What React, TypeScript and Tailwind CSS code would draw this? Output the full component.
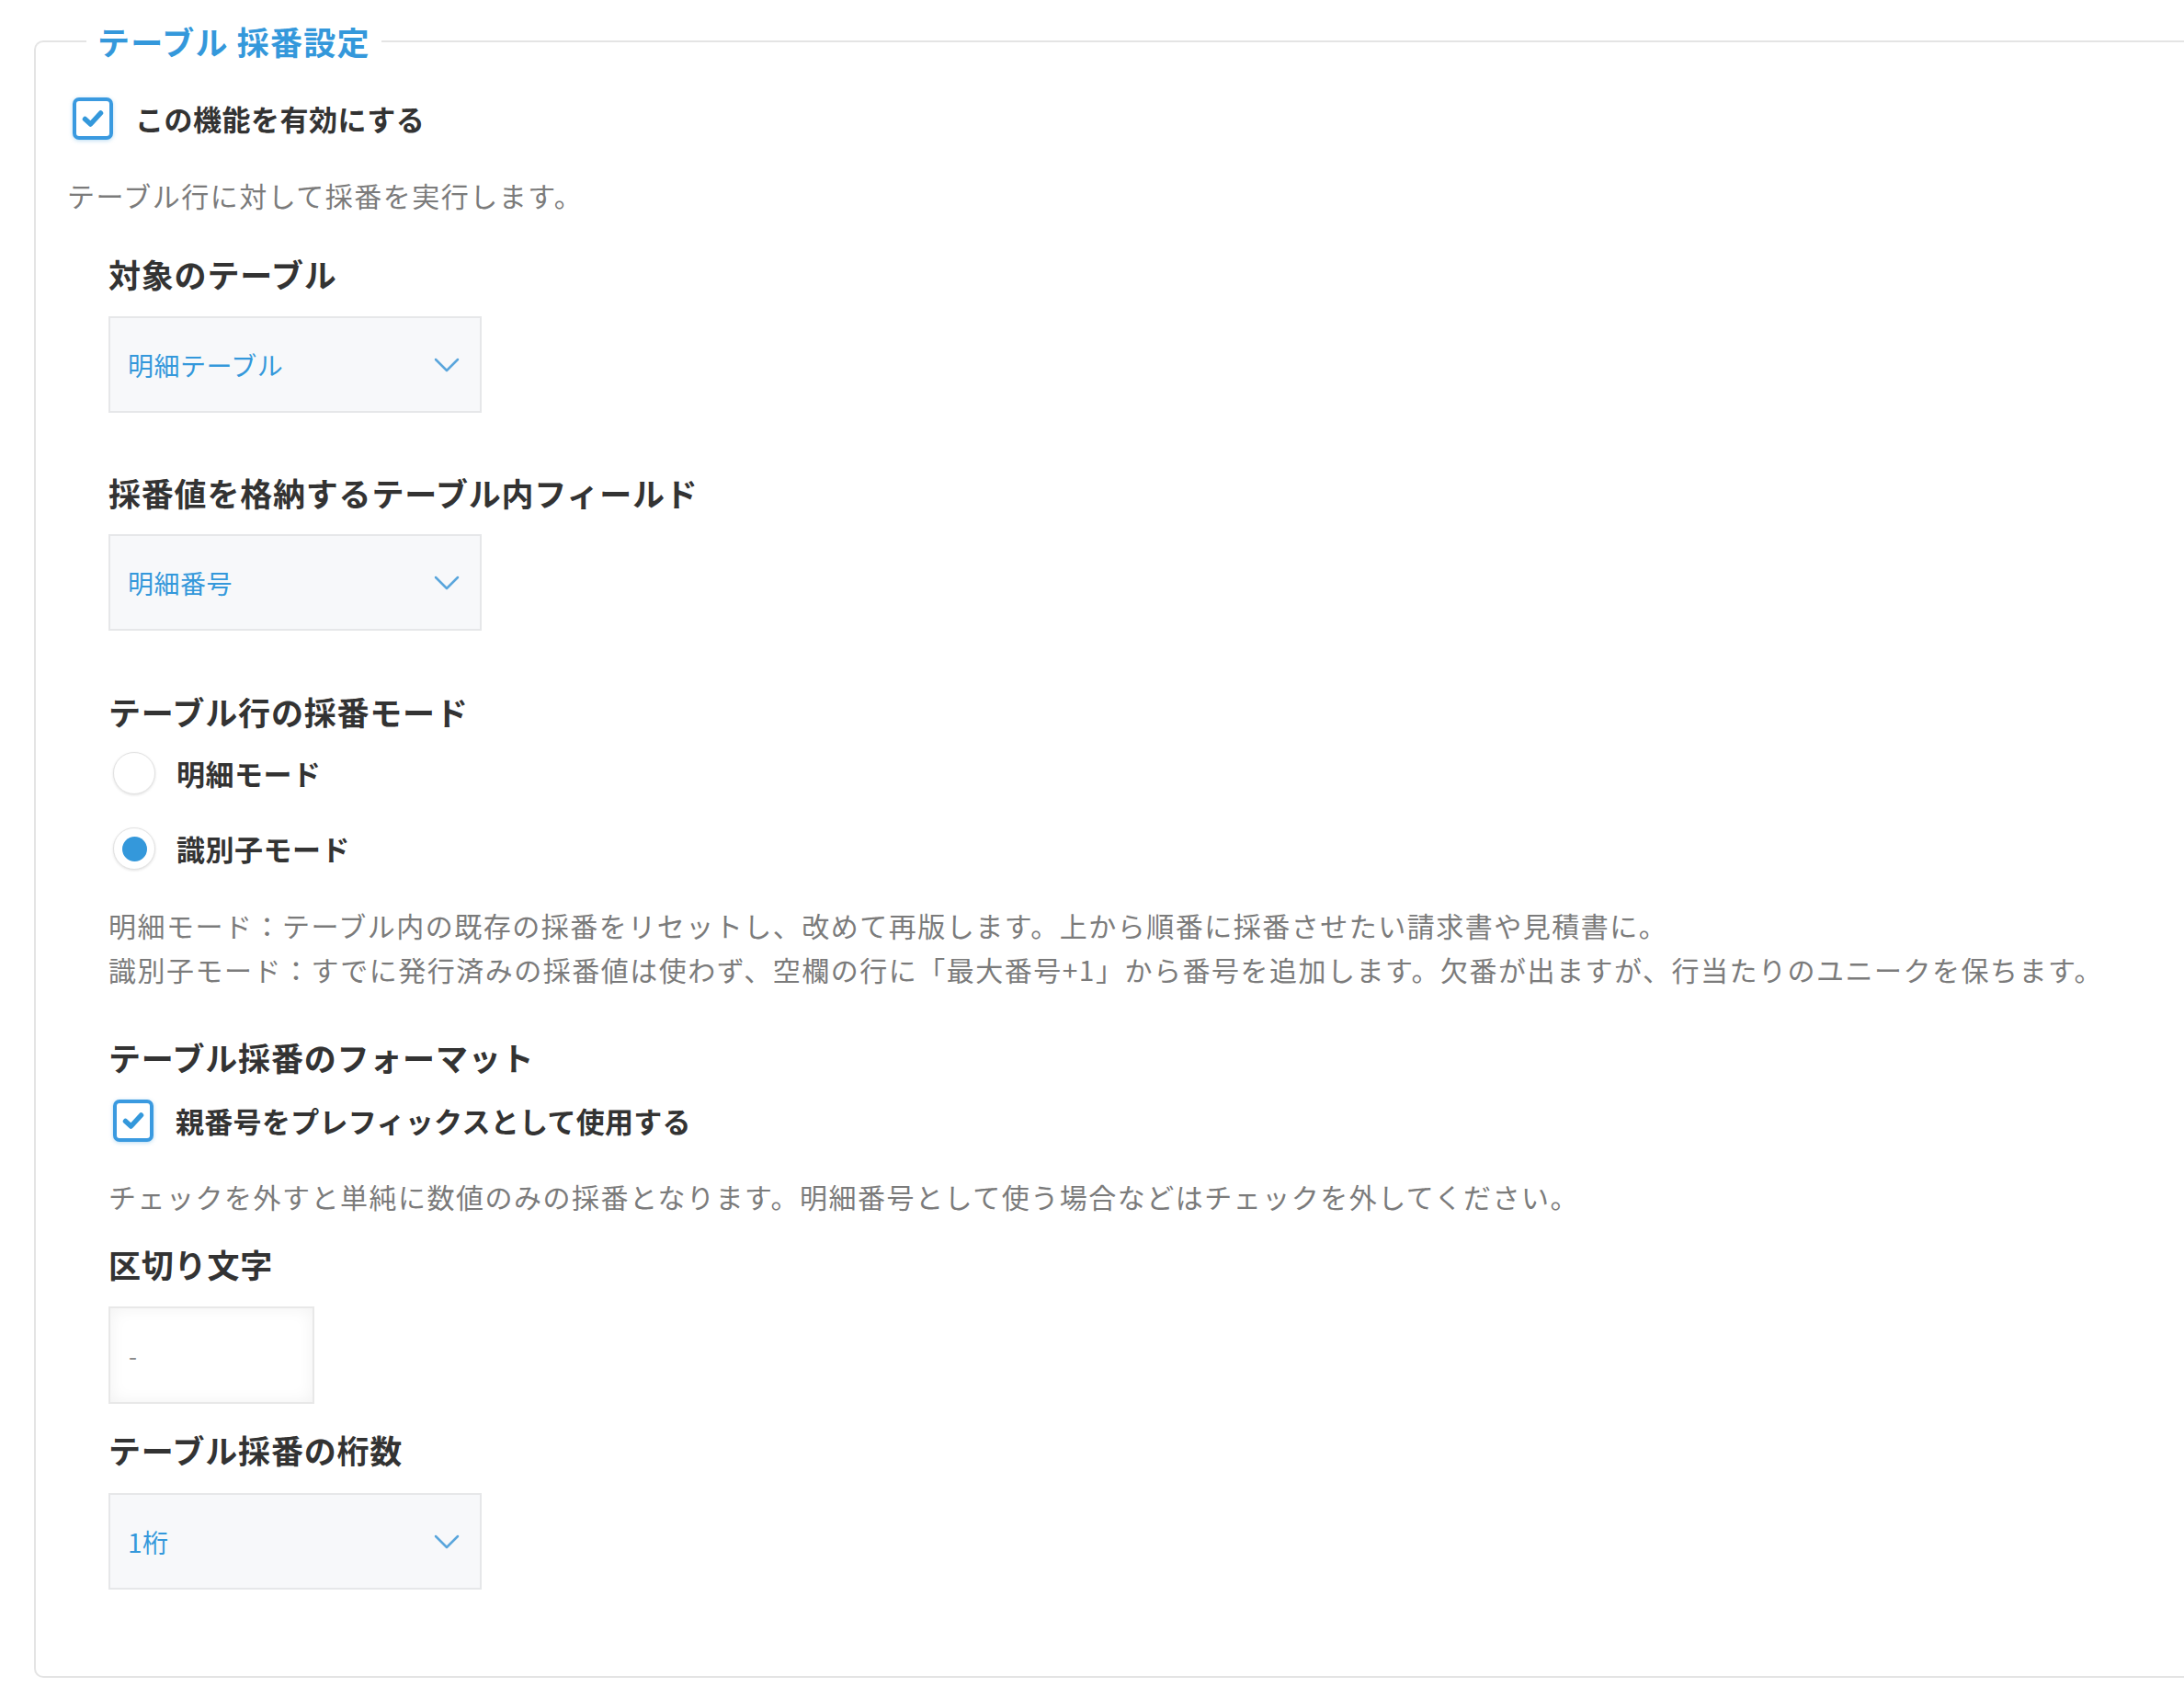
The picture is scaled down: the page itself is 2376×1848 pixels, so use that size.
import React from "react";

const font = { fontFamily: '"Noto Sans CJK JP", "Noto Sans", sans-serif' };

function Chevron() {
  return (
    <svg width="28" height="16" viewBox="0 0 28 16" fill="none">
      <path d="M2 2 L14 14 L26 2" stroke="#5aa6dc" strokeWidth="2.5" strokeLinecap="round" strokeLinejoin="round" />
    </svg>
  );
}

function Check() {
  return (
    <div className="flex h-[46px] w-[44px] shrink-0 items-center justify-center rounded-[7px] border-[4px] border-[#3a9ae0] bg-white shadow-[0_1px_4px_rgba(52,152,219,0.35)]">
      <svg width="26" height="22" viewBox="0 0 26 22" fill="none">
        <path d="M4.5 11.5 L10.5 17 L21.5 5" stroke="#3498db" strokeWidth="5.5" strokeLinecap="round" strokeLinejoin="round" />
      </svg>
    </div>
  );
}

function Radio({ on }: { on?: boolean }) {
  return (
    <div className="flex h-[46px] w-[46px] shrink-0 items-center justify-center rounded-full border border-[#e2e2e2] bg-white shadow-[0_1px_3px_rgba(0,0,0,0.12)]">
      {on && <div className="h-[27px] w-[27px] rounded-full bg-[#3498db]" />}
    </div>
  );
}

function Select({ value }: { value: string }) {
  return (
    <div className="flex h-[105px] w-[406px] items-center justify-between border-2 border-[#e6e7e9] bg-[#f7f8fa] pl-[19px] pr-[22px]">
      <span className="text-[28px] leading-none tracking-[0.5px] text-[#3498db]">{value}</span>
      <Chevron />
    </div>
  );
}

function Heading({ children, className }: { children: React.ReactNode; className?: string }) {
  return (
    <div className={"text-[35px] font-bold leading-[48px] tracking-[0.8px] text-[#333333] " + (className ?? "")}>{children}</div>
  );
}

export default function App() {
  return (
    <div className="min-h-[1848px] w-full bg-white pt-[23px]" style={font}>
      <fieldset className="ml-[37px] rounded-l-[10px] border-2 border-r-0 border-[#e4e4e4] pb-[94px] pl-[34px]">
        <legend className="ml-[21px] px-[12px] text-[35px] font-bold leading-[44px] tracking-[1.2px] text-[#3498db]">
          テーブル 採番設定
        </legend>

        <div className="ml-[6px] mt-[38px] flex items-center gap-[24px]">
          <Check />
          <span className="text-[31px] font-bold leading-[48px] tracking-[0.5px] text-[#333333]">この機能を有効にする</span>
        </div>

        <div className="mt-[37px] text-[30px] leading-[44px] tracking-[1.5px] text-[#7b7b7b]">テーブル行に対して採番を実行します。</div>

        <div className="pl-[45px]">
          <Heading className="mt-[40px]">対象のテーブル</Heading>
          <div className="mt-[22px]">
            <Select value="明細テーブル" />
          </div>

          <Heading className="mt-[63px]">採番値を格納するテーブル内フィールド</Heading>
          <div className="mt-[21px]">
            <Select value="明細番号" />
          </div>

          <Heading className="mt-[64px]">テーブル行の採番モード</Heading>
          <div className="ml-[5px] mt-[19px] flex items-center gap-[23px]">
            <Radio />
            <span className="text-[31px] font-bold leading-[48px] tracking-[0.5px] text-[#333333]">明細モード</span>
          </div>
          <div className="ml-[5px] mt-[34px] flex items-center gap-[23px]">
            <Radio on />
            <span className="text-[31px] font-bold leading-[48px] tracking-[0.5px] text-[#333333]">識別子モード</span>
          </div>

          <div className="mt-[35px] text-[30px] leading-[48px] tracking-[1.5px] text-[#7b7b7b]">
            <div>明細モード：テーブル内の既存の採番をリセットし、改めて再版します。上から順番に採番させたい請求書や見積書に。</div>
            <div>識別子モード：すでに発行済みの採番値は使わず、空欄の行に「最大番号+1」から番号を追加します。欠番が出ますが、行当たりのユニークを保ちます。</div>
          </div>

          <Heading className="mt-[48px]">テーブル採番のフォーマット</Heading>
          <div className="ml-[5px] mt-[21px] flex items-center gap-[24px]">
            <Check />
            <span className="text-[31px] font-bold leading-[48px] tracking-[0.3px] text-[#333333]">親番号をプレフィックスとして使用する</span>
          </div>

          <div className="mt-[36px] text-[30px] leading-[44px] tracking-[1.5px] text-[#7b7b7b]">
            チェックを外すと単純に数値のみの採番となります。明細番号として使う場合などはチェックを外してください。
          </div>

          <Heading className="mt-[28px]">区切り文字</Heading>
          <div className="mt-[22px] flex h-[106px] w-[224px] items-center border-2 border-[#e8e8e8] bg-white pl-[20px] shadow-[inset_0_0_18px_rgba(0,0,0,0.06)]">
            <span className="text-[26px] leading-none text-[#8a8a8a]">-</span>
          </div>

          <Heading className="mt-[26px]">テーブル採番の桁数</Heading>
          <div className="mt-[23px]">
            <Select value="1桁" />
          </div>
        </div>
      </fieldset>
    </div>
  );
}
